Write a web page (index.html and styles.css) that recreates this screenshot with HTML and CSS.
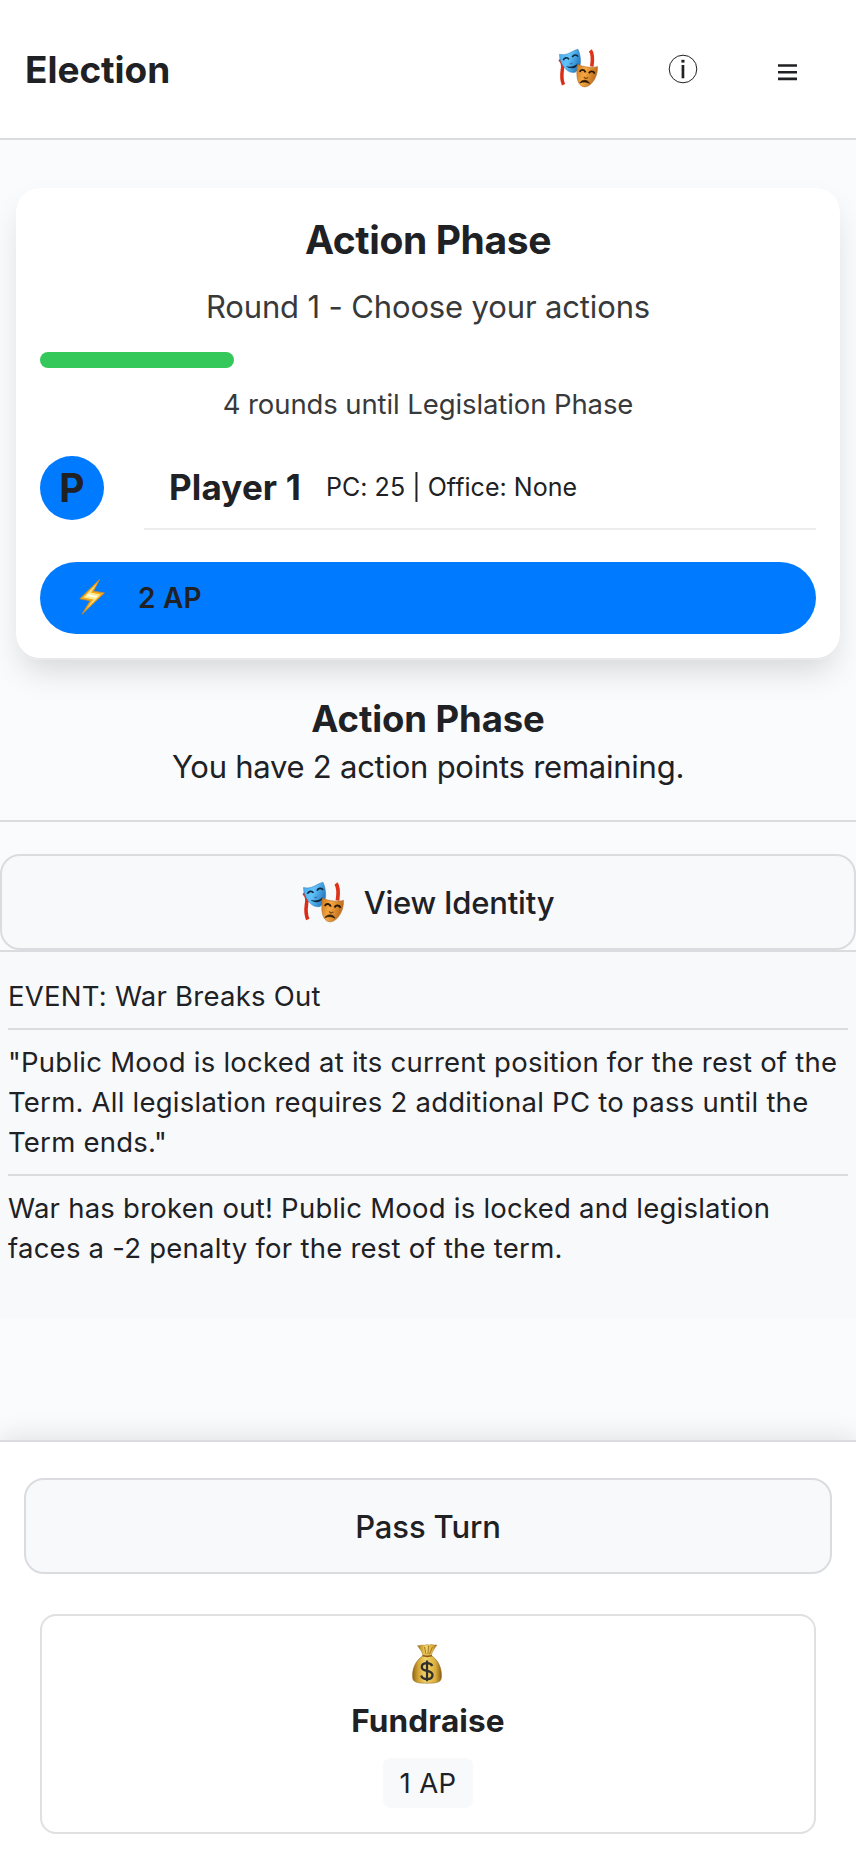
FILE: index.html
```html
<!DOCTYPE html>
<html lang="en">
<head>
<meta charset="utf-8">
<title>Election</title>
<link rel="stylesheet" href="styles.css">
</head>
<body>
<svg class="defs" width="0" height="0" aria-hidden="true">
  <defs>
    <linearGradient id="blue" x1="0" y1="0" x2="1" y2="0.4">
      <stop offset="0" stop-color="#45a8ea"/><stop offset="0.5" stop-color="#62c4fb"/><stop offset="1" stop-color="#2a80c6"/>
    </linearGradient>
    <linearGradient id="orange" x1="0" y1="0" x2="1" y2="0.3">
      <stop offset="0" stop-color="#cf7a20"/><stop offset="0.45" stop-color="#f5a842"/><stop offset="1" stop-color="#bd6c1c"/>
    </linearGradient>
    <linearGradient id="gold" x1="0" y1="0" x2="1" y2="0">
      <stop offset="0" stop-color="#8f6416"/><stop offset="0.18" stop-color="#d0a032"/><stop offset="0.45" stop-color="#f3d66c"/><stop offset="0.8" stop-color="#d9ad3c"/><stop offset="1" stop-color="#8a5c12"/>
    </linearGradient>
    <symbol id="masks" viewBox="0 0 42 42">
      <path d="M1.500 12c3 2 4 6 3 11-.7 5-1.200 10 1.300 15.500" fill="none" stroke="#d92d18" stroke-width="3.600"/>
      <path d="M34 2.500c3 4 2.500 10 1.500 17" fill="none" stroke="#dd331a" stroke-width="3.800"/>
      <path d="M1.500 6.500C5 7.500 9 7 12.500 5c3-1.600 5.500-3 8.500-3.700 1.200 2.500 2.600 7 2.700 12 .1 5-1.700 9.500-5.700 12.200-3.500.8-7.500-.5-10.500-4C3.500 17 1.500 12 1.500 6.500z" fill="url(#blue)" stroke="#2b79b3" stroke-width=".5"/>
      <path d="M5.500 12.700c1-2.600 4.300-3.400 6-.8M15 9.600c1.200-2.700 4.500-3.200 6-.6" fill="none" stroke="#10273d" stroke-width="1.700"/>
      <path d="M12.500 16.300c1 .7 2 .3 2.700-.5" fill="none" stroke="#1c5686" stroke-width="1"/>
      <path d="M8.500 18.800c4 1.700 9 .5 12.500-2.800-.6 3.400-3 5.300-6.200 5.200-2.800 0-5-1-6.300-2.400z" fill="#10273d"/>
      <path d="M20.500 17c3 1.500 7 2.700 11 3 4 .4 7.500.2 10-.7.3 6-1.500 12-5.500 17-3 3.700-7 5.500-10.500 4-4-2-5.500-7-5.700-12.500-.1-4 .1-8 .7-10.800z" fill="url(#orange)" stroke="#a4601b" stroke-width=".5"/>
      <path d="M22.800 25c1.500-2.800 5-2.600 6 .6M32.500 26.500c1.500-2.800 5-2.500 6 .4" fill="none" stroke="#2b1808" stroke-width="1.900"/>
      <path d="M27 30.500l2 1.500 2.500-1" fill="none" stroke="#85450f" stroke-width="1.200"/>
      <path d="M23 36.500c2.500-3.600 8-3.500 10 .6-3-1.700-6.500-2-10-.6z" fill="#2b1808" stroke="#2b1808" stroke-width=".8"/>
    </symbol>
  </defs>
</svg>

<header class="header">
  <h1 class="brand">Election</h1>
  <nav class="tools">
    <svg class="tool-masks"><use href="#masks"/></svg>
    <svg class="tool-info" viewBox="0 0 30 30">
      <circle cx="15" cy="15" r="13.800" fill="none" stroke="#202124" stroke-width="1"/>
      <rect x="13.400" y="5.800" width="3.100" height="2.800" fill="#202124"/>
      <rect x="13.600" y="11" width="2.700" height="13.300" fill="#202124"/>
    </svg>
    <svg class="tool-menu" viewBox="0 0 19 17">
      <path d="M0 1.500h19M0 8.200h19M0 14.900h19" stroke="#202124" stroke-width="2.600"/>
    </svg>
  </nav>
</header>

<main>
  <section class="card">
    <h2 class="card-title">Action Phase</h2>
    <p class="round">Round 1 - Choose your actions</p>
    <div class="track"><div class="fill"></div></div>
    <p class="until">4 rounds until Legislation Phase</p>
    <div class="player">
      <div class="avatar">P</div>
      <div class="player-info">
        <span class="name">Player 1</span>
        <span class="stats">PC: 25 | Office: None</span>
      </div>
    </div>
    <div class="ap-bar">
      <svg class="bolt" viewBox="0 0 26 36">
        <path d="M20.500.500L.8 19.800l10.400 2L3 35.200 25.400 13.900l-11-1.700z" fill="#f5a81c" stroke="#d98c14" stroke-width=".8"/>
        <path d="M18.300 4.300L4.500 18.500l10 2L7.800 29.800 21.500 15.500l-10-1.900z" fill="#ffe98a"/>
        <path d="M16 8L7.500 17.200l9.500 1.600-4 5.700 5.500-7.500-8.500-2z" fill="#fffbe0"/>
      </svg>
      <span class="ap-count">2 AP</span>
    </div>
  </section>

  <section class="phase">
    <h3 class="phase-title">Action Phase</h3>
    <p class="phase-text">You have 2 action points remaining.</p>
  </section>

  <button class="button identity"><svg class="identity-icon"><use href="#masks"/></svg><span>View Identity</span></button>

  <section class="log">
    <p class="entry">EVENT: War Breaks Out</p>
    <p class="entry">"Public Mood is locked at its current position for the rest of the Term. All legislation requires 2 additional PC to pass until the Term ends."</p>
    <p class="entry">War has broken out! Public Mood is locked and legislation faces a -2 penalty for the rest of the term.</p>
  </section>
</main>

<footer class="actions">
  <button class="button pass">Pass Turn</button>
  <div class="action">
    <svg class="bag" viewBox="0 0 30 40">
      <path d="M5.500 1.500c2 .8 3.500-.8 5.500-.3 2 .5 3-1 5-.4 2 .6 3.200-.8 5 .1 1.300.6 2.500-.4 3.800.2-1.800 3-4.800 6.500-5.500 10.400h-8.500C10.500 7.500 7.500 5 5.500 1.500z" fill="url(#gold)" stroke="#a57b29" stroke-width=".5"/>
      <path d="M12.500 3l1.500 7M16.500 2l-.5 8M20.500 3l-3 7" stroke="#a06e1b" stroke-width=".9"/>
      <path d="M10.500 12c3-1.200 6.500-1.200 9.500 0 5 3.500 8.700 9.500 9.300 17 .2 3 .3 6-1 7.600-2.500 2.300-6.500 2.600-13.300 2.600-6.800 0-10.800-.3-13.300-2.600C.4 35 .5 32 .7 29c.6-7.500 4.800-13.500 9.800-17z" fill="url(#gold)" stroke="#94691d" stroke-width=".6"/>
      <path d="M10.500 11.600c3 1 6.500 1 9.500 0" fill="none" stroke="#8f5714" stroke-width="1.500"/>
      <path d="M20.300 22c-.8-2-2.800-2.900-5.300-2.900-3.100 0-5.200 1.500-5.200 3.800 0 2.500 2.200 3.300 5.200 3.900 3.200.7 5.500 1.600 5.500 4.200s-2.300 4.100-5.500 4.100c-3 0-5.200-1.200-5.800-3.600M15 16.500v20.800" fill="none" stroke="#33302c" stroke-width="2.300"/>
    </svg>
    <h4 class="action-name">Fundraise</h4>
    <span class="cost">1 AP</span>
  </div>
</footer>
</body>
</html>
```
FILE: styles.css
```css
* {
  box-sizing: border-box;
  margin: 0;
}

body {
  display: flex;
  flex-direction: column;
  height: 1852px;
  overflow: hidden;
  background: #fafbfd;
  color: #202124;
  font-family: Inter, "Liberation Sans", sans-serif;
}

.defs {
  position: absolute;
}

.header {
  display: flex;
  align-items: center;
  justify-content: space-between;
  height: 140px;
  padding: 0 59px 0 25px;
  border-bottom: 2px solid #dadce0;
  background: #fff;
}

.brand {
  padding-top: 1px;
  font-size: 37px;
  line-height: 48px;
  letter-spacing: -0.05px;
}

.tools {
  display: flex;
  align-items: center;
}

.tool-masks {
  width: 40px;
  height: 40px;
  margin: -2px 70px 0 0;
}

.tool-info {
  width: 30px;
  height: 30px;
  margin-right: 80px;
}

.tool-menu {
  width: 19px;
  height: 17px;
  margin-top: 6px;
}

.card {
  height: 472px;
  margin: 48px 16px 0;
  padding: 28px 24px 0;
  border-radius: 24px;
  background: #fff;
  box-shadow: inset 0 -2px 0 #e8e8ec, 0 16px 32px -6px rgba(0, 0, 0, 0.15);
}

.card-title {
  font-size: 39px;
  line-height: 48px;
  letter-spacing: -0.38px;
  text-align: center;
}

.round {
  margin-top: 23px;
  color: #38393b;
  font-size: 31px;
  line-height: 40px;
  letter-spacing: -0.14px;
  text-align: center;
}

.track {
  height: 16px;
  margin-top: 25px;
}

.fill {
  width: 25%;
  height: 100%;
  border-radius: 8px;
  background: #34c759;
}

.until {
  margin-top: 16px;
  color: #38393b;
  font-size: 27.5px;
  line-height: 40px;
  letter-spacing: -0.1px;
  text-align: center;
}

.player {
  display: flex;
  gap: 40px;
  height: 82px;
  margin-top: 32px;
}

.avatar {
  width: 64px;
  height: 64px;
  border-radius: 50%;
  background: #007bff;
  font-size: 39px;
  font-weight: 700;
  line-height: 64px;
  text-align: center;
}

.player-info {
  display: flex;
  flex: 1;
  align-items: center;
  height: 74px;
  padding: 0 24px 10px 25px;
  border-bottom: 2px solid #ededf0;
}

.name {
  font-size: 35px;
  font-weight: 700;
  letter-spacing: 0.14px;
}

.stats {
  margin-left: 25px;
  font-size: 25px;
  letter-spacing: 0.05px;
}

.ap-bar {
  display: flex;
  align-items: center;
  height: 72px;
  margin-top: 24px;
  padding-left: 39px;
  border-radius: 36px;
  background: #007bff;
}

.bolt {
  width: 26px;
  height: 36px;
  margin: -2px 33px 0 0;
}

.ap-count {
  font-size: 28px;
  font-weight: 600;
  letter-spacing: 0.2px;
}

.phase {
  height: 162px;
  padding-top: 35px;
  border-bottom: 2px solid #dadce0;
  text-align: center;
}

.phase-title {
  font-size: 36.5px;
  line-height: 48px;
  letter-spacing: -0.1px;
}

.phase-text {
  font-size: 31px;
  line-height: 48px;
  letter-spacing: -0.25px;
}

.button {
  display: flex;
  align-items: center;
  justify-content: center;
  width: 100%;
  height: 96px;
  border: 2px solid #dadce0;
  border-radius: 20px;
  background: #f8f9fb;
  color: inherit;
  font-family: inherit;
  font-size: 31px;
  font-weight: 500;
}

.identity {
  margin-top: 32px;
  letter-spacing: -0.2px;
}

.identity-icon {
  width: 42px;
  height: 42px;
  margin-right: 20px;
}

.log {
  height: 368px;
  padding: 12px 8px;
  border-top: 2px solid #dadce0;
  background: #f8f9fb;
}

.entry {
  padding: 12px 0;
  border-bottom: 2px solid #dadce0;
  font-size: 27.5px;
  line-height: 40px;
  letter-spacing: 0.24px;
}

.entry:last-child {
  border-bottom: 0;
}

.actions {
  flex: none;
  height: 412px;
  margin-top: auto;
  padding: 36px 24px 0;
  border-top: 2px solid #dadce0;
  background: #fff;
  box-shadow: 0 -4px 24px rgba(0, 0, 0, 0.1);
}

.pass {
  letter-spacing: -0.12px;
}

.action {
  display: flex;
  flex-direction: column;
  align-items: center;
  height: 220px;
  margin: 40px 16px 0;
  padding-top: 28px;
  border: 2px solid #dfe0e2;
  border-radius: 16px;
  background: #fff;
}

.bag {
  width: 30px;
  height: 40px;
  margin-right: 2px;
}

.action-name {
  margin-top: 17px;
  font-size: 31.5px;
  line-height: 40px;
  letter-spacing: 0.15px;
}

.cost {
  height: 50px;
  margin-top: 17px;
  padding: 0 16px;
  border-radius: 8px;
  background: #f8f9fb;
  font-size: 27.5px;
  line-height: 51px;
  letter-spacing: 0.4px;
}
```
